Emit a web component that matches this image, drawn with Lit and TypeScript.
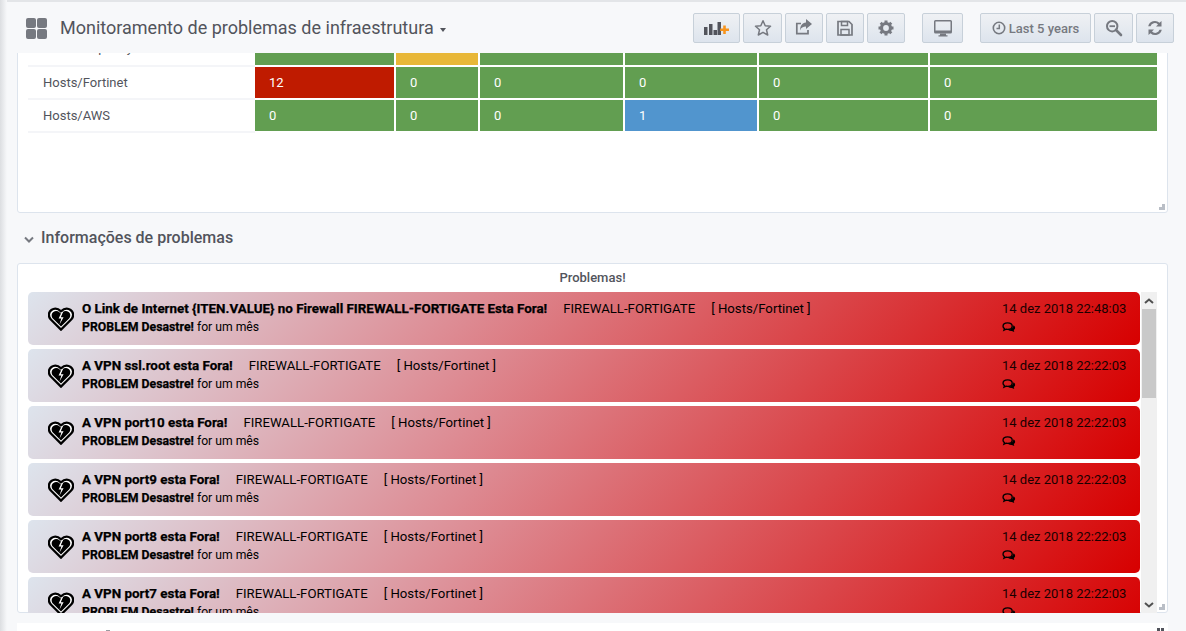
import { LitElement, html, css, svg } from "lit";
import { customElement } from "lit/decorators.js";

const cols = [
  { label: "Hosts/Capacity", cells: [["", "g"], ["", "y"], ["", "g"], ["", "g"], ["", "g"], ["", "g"]] },
  { label: "Hosts/Fortinet", cells: [["12", "r"], ["0", "g"], ["0", "g"], ["0", "g"], ["0", "g"], ["0", "g"]] },
  { label: "Hosts/AWS", cells: [["0", "g"], ["0", "g"], ["0", "g"], ["1", "b"], ["0", "g"], ["0", "g"]] },
];

const alerts = [
  ["O Link de Internet {ITEN.VALUE} no Firewall FIREWALL-FORTIGATE Esta Fora!", "14 dez 2018 22:48:03"],
  ["A VPN ssl.root esta Fora!", "14 dez 2018 22:22:03"],
  ["A VPN port10 esta Fora!", "14 dez 2018 22:22:03"],
  ["A VPN port9 esta Fora!", "14 dez 2018 22:22:03"],
  ["A VPN port8 esta Fora!", "14 dez 2018 22:22:03"],
  ["A VPN port7 esta Fora!", "14 dez 2018 22:22:03"],
];

const heart = html`<svg class="heart" viewBox="0 0 28 26" width="26" height="24">
  <path d="M14 24.500 3 13.500C-.2 10.200.4 5.400 3.600 3.200 6.800 1 10.800 1.600 14 4.800c3.200-3.200 7.200-3.800 10.400-1.600 3.200 2.200 3.800 7 .6 10.300z" fill="#fff" stroke="#000" stroke-width="2.500"/>
  <path d="M14 21 5.200 12.400C3.200 10 3.600 6.800 5.800 5.300 8 3.900 10.400 4.100 12.600 5.900 13.200 6.500 13.800 7 14 7.200 14.200 7 14.800 6.500 15.400 5.900 17.600 4.100 20 3.900 22.200 5.300 24.400 6.800 24.800 10 22.800 12.400z" fill="#000"/>
  <path d="M14.800 5.500 11.400 12.400H14.400L12.400 19 16.800 11H13.800L16.200 5.500z" fill="#fff"/>
</svg>`;

const comments = html`<svg class="cmt" viewBox="0 0 15 12" width="14" height="11">
  <path d="M6 1C3 1 1 2.600 1 4.500c0 1.100.6 2 1.600 2.700L2 9l2.400-1.100c.5.100 1 .1 1.600.1 3 0 5-1.600 5-3.500S9 1 6 1z" fill="none" stroke="#000" stroke-width="1.500"/>
  <path d="M12.300 3.600c1.100.6 1.900 1.600 1.900 2.800 0 1-.6 1.900-1.500 2.500l.6 2-2.700-1.200c-1.500.1-3-.3-4-1.100 2.900 0 5.500-1.900 5.700-5z" fill="#000"/>
</svg>`;

const i = {
  add: svg`<rect x="0" y="5" width="3.500" height="8" fill="#52545c"/><rect x="5" y="2" width="3.500" height="11" fill="#52545c"/><rect x="9.500" y="8" width="3.500" height="5" fill="#52545c"/><rect x="13.500" y="0" width="3.500" height="13" fill="#52545c"/><path d="M19.200 3.500v3h-3v2.500h3v3h2.600v-3h3.200V6.500h-3.200v-3z" fill="#f7941d"/>`,
  star: svg`<path d="M9 1.800 11.200 6.700 16.500 7.300 12.500 10.800 13.700 16 9 13.300 4.300 16 5.500 10.800 1.500 7.300 6.800 6.700z" fill="none" stroke="#767980" stroke-width="1.500" stroke-linejoin="round"/>`,
  share: svg`<path d="M13 11v3.700H1.800V4.500H6" fill="none" stroke="#767980" stroke-width="1.700"/><path d="M11 0 17 5 11 10V7.500C8 7.500 6 8.500 5 11.500 5 7 7 3.800 11 3.500z" fill="#767980"/>`,
  save: svg`<path d="M2 2.500h11l3 3V16H2z" fill="none" stroke="#767980" stroke-width="1.700"/><path d="M5.500 2.500h6v4h-6zM5 10.500h8V16H5z" fill="none" stroke="#767980" stroke-width="1.500"/>`,
  gear: svg`<circle cx="9" cy="9" r="4.500" fill="none" stroke="#767980" stroke-width="3.200"/><path d="M7.500 1.500h3V5h-3zM7.500 13h3v3.500h-3zM1.500 7.500H5v3H1.500zM13 7.500h3.500v3H13zM2.700 4.800l2-2 2.400 2.400-2 2zM10.900 12.900l2-2 2.400 2.400-2 2zM13.300 2.700l2 2-2.400 2.400-2-2zM4.800 10.900l2 2-2.400 2.400-2-2z" fill="#767980"/>`,
  mon: svg`<path d="M1.500 0h15a1.500 1.500 0 0 1 1.500 1.500V12a1.500 1.500 0 0 1-1.500 1.500h-15A1.500 1.500 0 0 1 0 12V1.500A1.500 1.500 0 0 1 1.500 0zM1.500 1.500V10.500h15V1.500z" fill="#767980" fill-rule="evenodd"/><path d="M6 13.500h6v1.800h1.500V16.500h-9v-1.200H6z" fill="#767980"/>`,
  clock: svg`<circle cx="7" cy="7" r="5.700" fill="none" stroke="#767980" stroke-width="1.600"/><path d="M7.300 3.500v4H4.500" fill="none" stroke="#767980" stroke-width="1.500"/>`,
  zoom: svg`<circle cx="7.200" cy="7.200" r="5.200" fill="none" stroke="#767980" stroke-width="2"/><path d="M11 11l5 5" stroke="#767980" stroke-width="2.600" stroke-linecap="round"/><path d="M4.500 6.300h5.500v1.800H4.500z" fill="#767980"/>`,
  sync: svg`<path d="M2.200 7.200A6.800 6.800 0 0 1 13.500 3.800L15.500 2V7.500H10L12 5.500A4.500 4.500 0 0 0 4.500 7.200z" fill="#767980"/><path d="M15.800 10.800A6.800 6.800 0 0 1 4.500 14.200L2.500 16V10.500H8L6 12.500A4.500 4.500 0 0 0 13.500 10.800z" fill="#767980"/>`,
};

function ico(body: unknown, w: number, h: number) {
  return html`<svg viewBox="0 0 ${w} ${h}" width=${w} height=${h}>${body}</svg>`;
}

@customElement("app-root")
export class AppRoot extends LitElement {
  static styles = css`
    :host {
      display: flex;
      flex-direction: column;
      height: 631px;
      width: 1186px;
      overflow: hidden;
      background: #f7f8fa;
      font-family: Roboto, "Liberation Sans", sans-serif;
      font-size: 13px;
      color: #52545c;
      position: relative;
    }
    .edge {
      position: absolute;
      left: 0;
      top: 0;
      bottom: 0;
      width: 7px;
      background: linear-gradient(90deg, #dcdee1, #f7f8fa);
      z-index: 5;
    }
    .nav {
      height: 53px;
      flex: none;
      box-sizing: border-box;
      border-top: 2px solid #e3e5e8;
      display: flex;
      align-items: center;
      padding: 0 12px 0 26px;
      position: relative;
      z-index: 2;
      background: #f7f8fa;
    }
    .logo {
      display: grid;
      grid-template-columns: 10px 10px;
      gap: 1px;
      margin-right: 13px;
      margin-top: 1px;
    }
    .logo i {
      width: 10px;
      height: 10px;
      border-radius: 2px;
      background: #767980;
    }
    .title {
      font-size: 18px;
      color: #52545c;
      white-space: nowrap;
    }
    .caret {
      width: 0;
      height: 0;
      border: 3.500px solid transparent;
      border-top: 4px solid #52545c;
      border-bottom: 0;
      margin: 4px auto 0 6px;
    }
    .btns {
      display: flex;
      gap: 3px;
    }
    .btns + .btns {
      margin-left: 17px;
    }
    .btn {
      box-sizing: border-box;
      height: 30px;
      margin-top: 1px;
      border: 1px solid #c7d0d9;
      border-radius: 2px;
      background: linear-gradient(180deg, #eff1f4, #dde4ed);
      display: flex;
      align-items: center;
      justify-content: center;
      gap: 3px;
      color: #767980;
      font-weight: 500;
      font-size: 13px;
      white-space: nowrap;
    }
    .main {
      flex: 1;
      min-height: 0;
      overflow: hidden;
      padding: 0 18px 0 17px;
    }
    .panel {
      box-sizing: border-box;
      background: #fff;
      border: 1px solid #dde4ed;
      border-radius: 3px;
      position: relative;
    }
    .grip {
      position: absolute;
      right: 2px;
      bottom: 2px;
      width: 6px;
      height: 6px;
      background: linear-gradient(#b9bec6, #b9bec6) right top / 3px 3px no-repeat,
        linear-gradient(#b9bec6, #b9bec6) left bottom / 6px 3px no-repeat;
    }
    .p1 {
      margin-top: -29px;
      height: 189px;
      padding: 9px 10px 0;
    }
    .row {
      display: grid;
      grid-template-columns: 227px 141px 84px 145px 134px 171px 227px;
      height: 33px;
    }
    .lab {
      box-sizing: border-box;
      height: 33px;
      padding-left: 15px;
      line-height: 31px;
      border-bottom: 2px solid #f4f5f8;
      color: #52545c;
    }
    .row:first-child .lab {
      line-height: 28px;
    }
    .cell {
      height: 31px;
      margin-right: 2px;
      line-height: 31px;
      padding-left: 14px;
      color: #fff;
      box-sizing: border-box;
    }
    .cell:last-child {
      margin-right: 0;
    }
    .g { background: #629e51; }
    .r { background: #bf1b00; }
    .y { background: #e8b738; }
    .b { background: #5195ce; }
    .rowhead {
      box-sizing: border-box;
      height: 50px;
      padding: 0 0 2px 7px;
      display: flex;
      align-items: center;
      gap: 7px;
      font-size: 16px;
      font-weight: 500;
      color: #52545c;
    }
    .chev {
      margin-top: 4px;
    }
    .p2 {
      height: 350px;
      padding: 0 10px;
    }
    .ptitle {
      height: 28px;
      line-height: 28px;
      text-align: center;
      font-size: 13px;
      font-weight: 500;
      color: #52545c;
    }
    .listwrap {
      display: flex;
      gap: 1px;
      height: 321px;
      position: relative;
    }
    .list {
      width: 1112px;
      overflow: hidden;
      display: flex;
      flex-direction: column;
      gap: 4px;
    }
    .alert {
      flex: none;
      height: 53px;
      border-radius: 5px;
      background: linear-gradient(135deg, #dde4ed 0%, #dd8a92 40%, #d70000 100%);
      display: flex;
      align-items: center;
      color: #000;
      position: relative;
    }
    .heart {
      margin-left: 20px;
      margin-right: 8px;
      flex: none;
    }
    .body {
      flex: 1;
      line-height: 18px;
      white-space: nowrap;
      font-size: 12.200px;
      margin-top: -2px;
    }
    .body b {
      font-weight: 700;
      font-size: 12.300px;
      -webkit-text-stroke: 0.25px #000;
    }
    .l1 {
      display: flex;
      gap: 16px;
      font-size: 13.200px;
    }
    .l1 b {
      font-size: 13.400px;
    }
    .when {
      width: 138px;
      flex: none;
      line-height: 18px;
      font-size: 13px;
      color: #1a0000;
      white-space: nowrap;
      margin-top: -4px;
    }
    .cmt {
      display: block;
      margin-top: 4px;
    }
    .sb {
      width: 16px;
      flex: none;
      background: #f0f0f0;
      position: relative;
    }
    .thumb {
      position: absolute;
      left: 1px;
      right: 1px;
      top: 17px;
      height: 89px;
      background: #c9c9c9;
    }
    .arrow {
      position: absolute;
      left: 3px;
    }
    .up { top: 6px; }
    .down { bottom: 5px; }
    .next {
      margin-top: 10px;
      height: 30px;
      background: #fff;
      position: relative;
    }
    .dots {
      position: absolute;
      right: 4px;
      top: 5px;
      width: 7px;
      height: 3px;
      background: linear-gradient(90deg, #52545c 0 3px, transparent 3px 4px, #52545c 4px);
    }
    .tip {
      position: absolute;
      left: 89px;
      top: 7px;
      width: 4px;
      height: 1px;
      background: #9a9ca2;
    }
  `;

  render() {
    return html`
      <div class="edge"></div>
      <div class="nav">
        <div class="logo"><i></i><i></i><i></i><i></i></div>
        <div class="title">Monitoramento de problemas de infraestrutura</div>
        <div class="caret"></div>
        <div class="btns">
          <div class="btn" style="width:47px">${ico(i.add, 25, 13)}</div>
          <div class="btn" style="width:39px">${ico(i.star, 18, 18)}</div>
          <div class="btn" style="width:38px">${ico(i.share, 18, 18)}</div>
          <div class="btn" style="width:38px">${ico(i.save, 18, 18)}</div>
          <div class="btn" style="width:38px">${ico(i.gear, 18, 18)}</div>
        </div>
        <div class="btns">
          <div class="btn" style="width:41px">${ico(i.mon, 18, 17)}</div>
        </div>
        <div class="btns">
          <div class="btn" style="width:111px">${ico(i.clock, 14, 14)} Last 5 years</div>
          <div class="btn" style="width:39px">${ico(i.zoom, 18, 18)}</div>
          <div class="btn" style="width:38px">${ico(i.sync, 18, 18)}</div>
        </div>
      </div>
      <div class="main">
        <div class="panel p1">
          ${cols.map(
            (r) => html`<div class="row">
              <div class="lab">${r.label}</div>
              ${r.cells.map(([v, c]) => html`<div class="cell ${c}">${v}</div>`)}
            </div>`
          )}
          <div class="grip"></div>
        </div>
        <div class="rowhead">
          <svg class="chev" viewBox="0 0 10 7" width="10" height="7">
            <path d="M1 1.500 5 5.500 9 1.500" fill="none" stroke="#767980" stroke-width="2"/>
          </svg>
          Informações de problemas
        </div>
        <div class="panel p2">
          <div class="ptitle">Problemas!</div>
          <div class="listwrap">
            <div class="list">
              ${alerts.map(
                ([t, d]) => html`<div class="alert">
                  ${heart}
                  <div class="body">
                    <div class="l1"><b>${t}</b><span>FIREWALL-FORTIGATE</span><span>[ Hosts/Fortinet ]</span></div>
                    <div><b>PROBLEM Desastre!</b> for um mês</div>
                  </div>
                  <div class="when">${d}${comments}</div>
                </div>`
              )}
            </div>
            <div class="sb">
              <svg class="arrow up" viewBox="0 0 10 6" width="10" height="6"><path d="M1 5 5 1.500 9 5" fill="none" stroke="#505050" stroke-width="2"/></svg>
              <div class="thumb"></div>
              <svg class="arrow down" viewBox="0 0 10 6" width="10" height="6"><path d="M1 1 5 4.500 9 1" fill="none" stroke="#505050" stroke-width="2"/></svg>
            </div>
          </div>
          <div class="grip"></div>
        </div>
        <div class="next"><div class="tip"></div><div class="dots"></div></div>
      </div>
    `;
  }
}
